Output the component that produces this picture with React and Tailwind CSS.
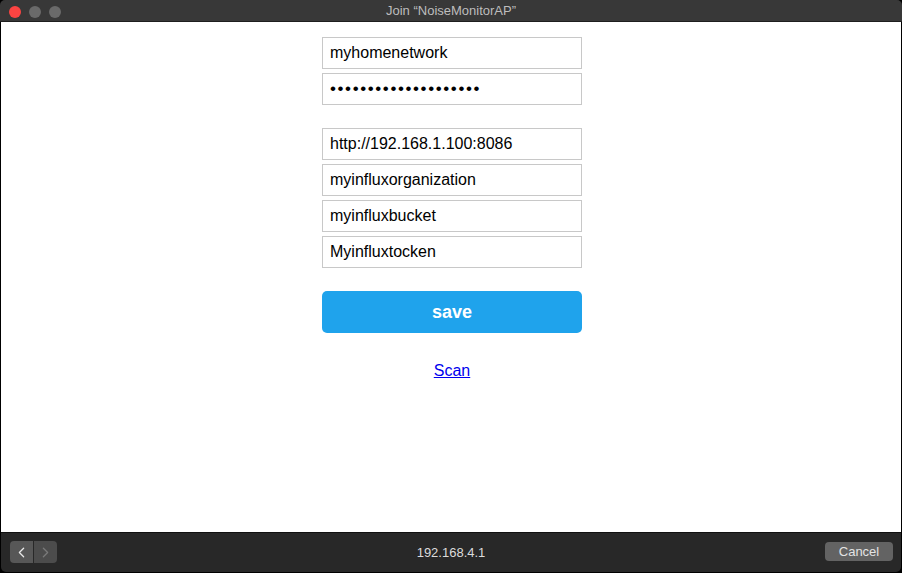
import { ChevronLeft, ChevronRight } from "lucide-react";

const fields = [
  "http://192.168.1.100:8086",
  "myinfluxorganization",
  "myinfluxbucket",
  "Myinfluxtocken",
];

function Field({ value, type = "text" }) {
  return (
    <input
      type={type}
      readOnly
      defaultValue={value}
      className={
        "w-[260px] h-[32px] border border-[#c8c8c8] bg-white px-[7px] text-[16px] text-black outline-none " +
        (type === "password" ? "tracking-[1.6px] text-[17px]" : "")
      }
    />
  );
}

function App() {
  return (
    <div className="w-[902px] h-[573px] bg-black flex flex-col overflow-hidden font-['Liberation_Sans',Arial,sans-serif]">
      {/* title bar */}
      <div className="relative h-[22px] bg-[#383838] border-b border-[#1e1e1e] rounded-t-[5px] flex items-center justify-center">
        <div className="absolute left-[9px] top-[6px] flex gap-[8px]">
          <span className="w-[12px] h-[12px] rounded-full bg-[#fc4442]" />
          <span className="w-[12px] h-[12px] rounded-full bg-[#6a6a6a]" />
          <span className="w-[12px] h-[12px] rounded-full bg-[#6a6a6a]" />
        </div>
        <span className="text-[13px] text-[#bdbdbd]">Join “NoiseMonitorAP”</span>
      </div>

      {/* page */}
      <div className="flex-1 bg-white mx-[1px] flex flex-col items-center pt-[15px] pl-[2px]">
        <div className="flex flex-col gap-[4px]">
          <Field value="myhomenetwork" />
          <Field value="mysecretpassword1234" type="password" />
        </div>
        <div className="flex flex-col gap-[4px] mt-[23px]">
          {fields.map((f) => (
            <Field key={f} value={f} />
          ))}
        </div>
        <button className="mt-[23px] w-[260px] h-[42px] rounded-[5px] bg-[#1fa3ec] text-white text-[18px] font-bold">
          save
        </button>
        <a href="#" className="mt-[26px] text-[16px] text-[#0000ee] underline">
          Scan
        </a>
      </div>

      {/* bottom bar */}
      <div className="relative h-[40px] bg-[#282828] border-t border-[#111] mx-[1px] mb-[1px] rounded-b-[5px] flex items-center justify-center">
        <div className="absolute left-[9px] top-[8px] flex gap-[1px]">
          <span className="w-[23px] h-[22px] rounded-l-[4px] bg-[#575757] flex items-center justify-center">
            <ChevronLeft size={17} strokeWidth={1.8} className="text-[#e8e8e8]" />
          </span>
          <span className="w-[23px] h-[22px] rounded-r-[4px] bg-[#4c4c4c] flex items-center justify-center">
            <ChevronRight size={17} strokeWidth={1.8} className="text-[#7a7a7a]" />
          </span>
        </div>
        <span className="text-[13px] text-[#dcdcdc]">192.168.4.1</span>
        <button className="absolute right-[8px] top-[9px] w-[68px] h-[19px] rounded-[4px] bg-[#636363] text-[13px] text-[#e4e4e4]">
          Cancel
        </button>
      </div>
    </div>
  );
}

export default App;
